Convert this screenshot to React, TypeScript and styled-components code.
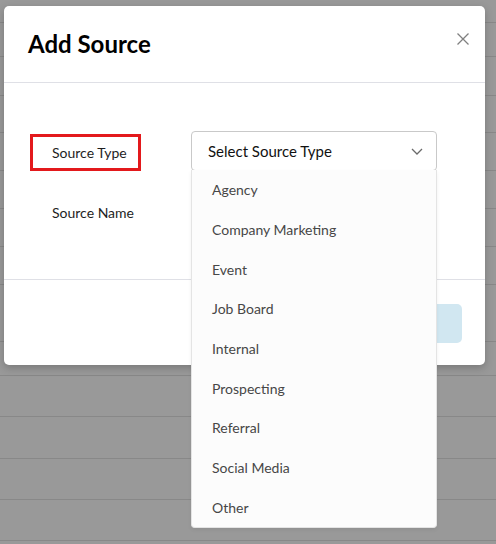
import styled, { createGlobalStyle } from "styled-components";

const GlobalStyle = createGlobalStyle`
  html, body {
    margin: 0;
    padding: 0;
    background: #999999;
  }
  body {
    font-family: Lato, "Open Sans", sans-serif;
  }
  * {
    box-sizing: border-box;
  }
`;

const ROW_HEIGHTS = [23, 34, 39, 37, 38, 38, 38, 38, 57, 34, 41, 42, 41, 41];

const SOURCE_TYPES = [
  "Agency",
  "Company Marketing",
  "Event",
  "Job Board",
  "Internal",
  "Prospecting",
  "Referral",
  "Social Media",
  "Other",
];

const Page = styled.div`
  position: relative;
  width: 496px;
  height: 544px;
  overflow: hidden;
  background: #999999;
`;

const Table = styled.div`
  display: flex;
  flex-direction: column;
`;

const TableRow = styled.div<{ $h: number }>`
  height: ${(p) => p.$h}px;
  border-bottom: 1px solid #888888;
`;

const Modal = styled.div`
  position: absolute;
  left: 4px;
  top: 6px;
  width: 481px;
  background: #ffffff;
  border-radius: 5px;
  box-shadow: 0 3px 8px rgba(0, 0, 0, 0.22);
  display: flex;
  flex-direction: column;
`;

const Header = styled.div`
  height: 77px;
  display: flex;
  align-items: center;
  justify-content: space-between;
  padding: 0 15px 6px 24px;
  border-bottom: 1px solid #dfe0e6;
`;

const Title = styled.h2`
  margin: 0;
  padding-top: 4px;
  font-size: 24px;
  font-weight: 700;
  color: #000000;
`;

const CloseButton = styled.button`
  border: none;
  background: none;
  padding: 0;
  width: 14px;
  height: 14px;
  margin-bottom: 4px;
  cursor: pointer;
  display: flex;
`;

const Body = styled.div`
  height: 196px;
  padding: 48px 0 0 26px;
  display: flex;
  flex-direction: column;
  gap: 23px;
`;

const Row = styled.div`
  display: flex;
  align-items: center;
`;

const Label = styled.div<{ $highlight?: boolean }>`
  width: 161px;
  height: 37px;
  padding-left: 22px;
  display: flex;
  align-items: center;
  font-size: 14px;
  color: #1e1e1e;
  ${(p) =>
    p.$highlight
      ? `
    width: 111px;
    margin-right: 50px;
    margin-top: 2px;
    border: 3px solid #e3191c;
    padding-left: 19px;
  `
      : ""}
`;

const SelectWrap = styled.div`
  position: relative;
  width: 246px;
`;

const SelectBox = styled.div`
  height: 40px;
  border: 1px solid #c9c9c9;
  border-radius: 4px;
  display: flex;
  align-items: center;
  justify-content: space-between;
  padding: 0 12px 0 16px;
  font-size: 15px;
  color: #111111;
`;

const Menu = styled.ul`
  position: absolute;
  left: 0;
  top: 39px;
  width: 246px;
  margin: 0;
  padding: 0;
  list-style: none;
  background: #fcfcfc;
  border: 1px solid #e4e4e4;
  border-top: none;
  border-radius: 0 0 4px 4px;
  box-shadow: 0 2px 4px rgba(0, 0, 0, 0.06);
  z-index: 2;
`;

const MenuItem = styled.li`
  height: 39.7px;
  display: flex;
  align-items: center;
  padding-left: 20px;
  font-size: 14px;
  color: #474747;
`;

const Footer = styled.div`
  height: 86px;
  border-top: 1px solid #dfe0e6;
  display: flex;
  align-items: center;
  justify-content: flex-end;
  padding: 0 23px 0 0;
`;

const SaveButton = styled.button`
  width: 90px;
  height: 39px;
  margin-top: 1px;
  border: none;
  border-radius: 5px;
  background: #d1e7f1;
`;

const Chevron = () => (
  <svg width="14" height="14" viewBox="0 0 14 14" fill="none">
    <path d="M2 5l5 5 5-5" stroke="#6a6a6a" strokeWidth="1.3" />
  </svg>
);

const CloseIcon = () => (
  <svg width="14" height="14" viewBox="0 0 14 14" fill="none">
    <path d="M1.5 1.5l11 11M12.5 1.5l-11 11" stroke="#808080" strokeWidth="1.3" />
  </svg>
);

export default function App() {
  return (
    <>
      <GlobalStyle />
      <Page>
        <Table>
          {ROW_HEIGHTS.map((h, i) => (
            <TableRow key={i} $h={h} />
          ))}
        </Table>
        <Modal>
          <Header>
            <Title>Add Source</Title>
            <CloseButton aria-label="Close">
              <CloseIcon />
            </CloseButton>
          </Header>
          <Body>
            <Row>
              <Label $highlight>Source Type</Label>
              <SelectWrap>
                <SelectBox>
                  Select Source Type
                  <Chevron />
                </SelectBox>
                <Menu>
                  {SOURCE_TYPES.map((t) => (
                    <MenuItem key={t}>{t}</MenuItem>
                  ))}
                </Menu>
              </SelectWrap>
            </Row>
            <Row>
              <Label>Source Name</Label>
            </Row>
          </Body>
          <Footer>
            <SaveButton />
          </Footer>
        </Modal>
      </Page>
    </>
  );
}
